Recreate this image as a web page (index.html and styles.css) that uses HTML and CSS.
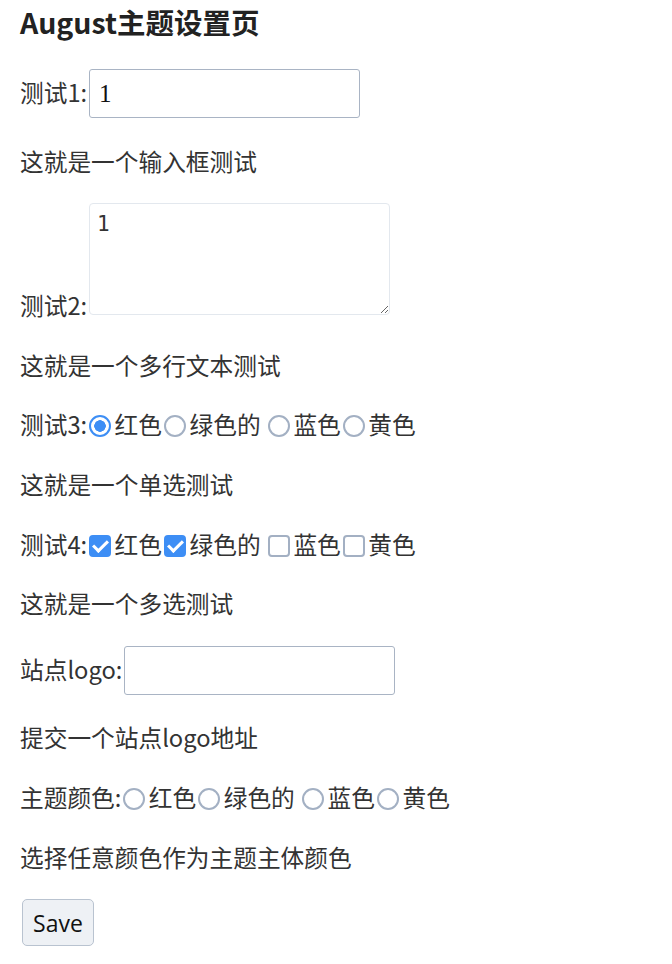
FILE: index.html
```html
<!DOCTYPE html>
<html lang="zh-CN">
<head>
  <meta charset="UTF-8" />
  <meta name="viewport" content="width=device-width, initial-scale=1.0" />
  <title>August主题设置页</title>
  <link rel="stylesheet" href="styles.css">
</head>
<body>
  <div class="wrap">
    <h3>August主题设置页</h3>
    <form class="settings">
      <div class="field">
        <label>测试1:</label><input type="text" class="text-input" value="1">
      </div>
      <p class="desc">这就是一个输入框测试</p>

      <div class="field">
        <label>测试2:</label><textarea class="text-area">1</textarea>
      </div>
      <p class="desc">这就是一个多行文本测试</p>

      <div class="field">
        <label>测试3:</label><input type="radio" name="t3" checked>红色<input type="radio" name="t3">绿色的 <input type="radio" name="t3">蓝色<input type="radio" name="t3">黄色
      </div>
      <p class="desc">这就是一个单选测试</p>

      <div class="field">
        <label>测试4:</label><input type="checkbox" checked>红色<input type="checkbox" checked>绿色的 <input type="checkbox">蓝色<input type="checkbox">黄色
      </div>
      <p class="desc">这就是一个多选测试</p>

      <div class="field">
        <label>站点logo:</label><input type="text" class="text-input">
      </div>
      <p class="desc">提交一个站点logo地址</p>

      <div class="field">
        <label>主题颜色:</label><input type="radio" name="color">红色<input type="radio" name="color">绿色的 <input type="radio" name="color">蓝色<input type="radio" name="color">黄色
      </div>
      <p class="desc">选择任意颜色作为主题主体颜色</p>

      <button type="button" class="save-button">Save</button>
    </form>
  </div>
</body>
</html>
```

FILE: styles.css
```css
body {
  margin: 0;
  padding: 0;
  background-color: #ffffff;
  color: #333333;
  font-family: "Noto Sans CJK SC", "Noto Sans", sans-serif;
  font-size: 23.7px;
  line-height: 34px;
}
.wrap {
  padding: 4px 20px 20px;
}
h3 {
  margin: 0 0 29px;
  font-size: 28.5px;
  line-height: 36px;
  font-weight: bold;
  color: #222222;
}
.field {
  margin: 0;
}
.desc {
  margin: 25.6px 0;
}
.text-input {
  width: 271px;
  height: 49px;
  box-sizing: border-box;
  margin: 0 0 0 2px;
  padding: 0 9px;
  border: 1px solid #a9b4c4;
  border-radius: 3px;
  font-family: "Liberation Serif", serif;
  font-size: 25px;
  color: #111111;
  vertical-align: baseline;
}
.text-area {
  width: 301px;
  height: 112px;
  box-sizing: border-box;
  margin: 0 0 0 2px;
  padding: 8px 7px;
  border: 1px solid #e3e8ee;
  border-radius: 4px;
  font-family: "DejaVu Sans Mono", monospace;
  font-size: 21px;
  color: #333333;
  vertical-align: baseline;
}
input[type="radio"],
input[type="checkbox"] {
  appearance: none;
  -webkit-appearance: none;
  position: relative;
  box-sizing: border-box;
  width: 22px;
  height: 22px;
  margin: 0 3.5px 0 2px;
  border: 2.5px solid #a3b0c3;
  background-color: #ffffff;
  vertical-align: -3px;
}
input[type="radio"] {
  border-radius: 50%;
}
input[type="radio"]:checked {
  border-color: #3d8ef5;
  background: radial-gradient(circle, #3d8ef5 0 5.5px, #ffffff 6px);
}
input[type="checkbox"] {
  border-radius: 4px;
}
input[type="checkbox"]:checked {
  border-color: #3d8ef5;
  background-color: #3d8ef5;
}
input[type="checkbox"]:checked::after {
  content: "";
  position: absolute;
  left: 5px;
  top: 0px;
  width: 6px;
  height: 12px;
  border: solid #ffffff;
  border-width: 0 3px 3px 0;
  transform: rotate(45deg);
}
.save-button {
  width: 72px;
  height: 47px;
  margin: 0 0 0 2px;
  padding: 0;
  border: 1px solid #b9c3d0;
  border-radius: 5px;
  background-color: #eef1f5;
  color: #111111;
  font-family: "Open Sans", "Noto Sans", sans-serif;
  font-size: 23px;
}
```
